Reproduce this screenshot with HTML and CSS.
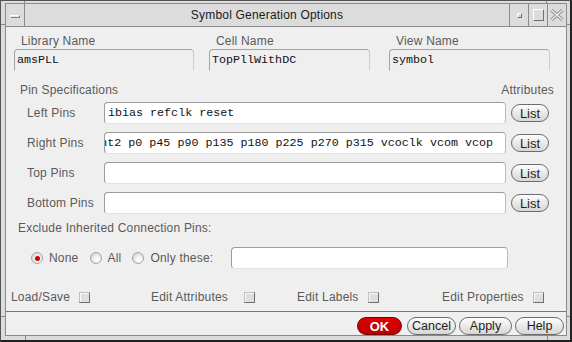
FILE: index.html
```html
<!DOCTYPE html>
<html lang="en">
<head>
    <meta charset="UTF-8">
    <title>Symbol Generation Options</title>
    <link rel="stylesheet" href="styles.css">
</head>
<body>
    <div class="window">
        <!-- Title bar -->
        <div class="titlebar">
            <div class="tb-menu"><span class="menu-bar"></span></div>
            <div class="tb-title">Symbol Generation Options</div>
            <div class="tb-btn"><span class="icon-min"></span></div>
            <div class="tb-btn"><span class="icon-max"></span></div>
            <div class="tb-btn">
                <svg width="14" height="12" viewBox="0 0 14 12">
                    <path d="M1.5 1 L12.5 11 M12.5 1 L1.5 11" stroke="#8c8c8c" stroke-width="3.2" fill="none"/>
                    <path d="M1.5 1 L12.5 11 M12.5 1 L1.5 11" stroke="#ececec" stroke-width="1.5" fill="none"/>
                </svg>
            </div>
        </div>

        <!-- Dialog body -->
        <div class="content">
            <div class="main">
                <div class="names">
                    <div class="name-col col-lib">
                        <div class="name-label">Library Name</div>
                        <div class="ro-field">amsPLL</div>
                    </div>
                    <div class="name-col col-cell">
                        <div class="name-label">Cell Name</div>
                        <div class="ro-field">TopPllWithDC</div>
                    </div>
                    <div class="name-col col-view">
                        <div class="name-label">View Name</div>
                        <div class="ro-field">symbol</div>
                    </div>
                </div>

                <div class="pin-head">
                    <span>Pin Specifications</span>
                    <span>Attributes</span>
                </div>

                <div class="pin-rows">
                    <div class="pin-row">
                        <span class="pin-label">Left Pins</span>
                        <div class="input">ibias refclk reset</div>
                        <button class="btn list-btn">List</button>
                    </div>
                    <div class="pin-row">
                        <span class="pin-label">Right Pins</span>
                        <div class="input input-scrolled"><span class="scroll-text">nt2 p0 p45 p90 p135 p180 p225 p270 p315 vcoclk vcom vcop</span></div>
                        <button class="btn list-btn">List</button>
                    </div>
                    <div class="pin-row">
                        <span class="pin-label">Top Pins</span>
                        <div class="input"></div>
                        <button class="btn list-btn">List</button>
                    </div>
                    <div class="pin-row">
                        <span class="pin-label">Bottom Pins</span>
                        <div class="input"></div>
                        <button class="btn list-btn">List</button>
                    </div>
                </div>

                <div class="exclude-label">Exclude Inherited Connection Pins:</div>

                <div class="radio-row">
                    <span class="radio-item"><span class="radio on"></span>None</span>
                    <span class="radio-item"><span class="radio"></span>All</span>
                    <span class="radio-item last"><span class="radio"></span>Only these:</span>
                    <div class="input only-input"></div>
                </div>

                <div class="check-row">
                    <span class="check-item">Load/Save <span class="checkbox"></span></span>
                    <span class="check-item wide">Edit Attributes <span class="checkbox"></span></span>
                    <span class="check-item">Edit Labels <span class="checkbox"></span></span>
                    <span class="check-item">Edit Properties <span class="checkbox"></span></span>
                </div>
            </div>

            <div class="footer">
                <button class="btn btn-ok">OK</button>
                <button class="btn btn-cancel">Cancel</button>
                <button class="btn btn-apply">Apply</button>
                <button class="btn btn-help">Help</button>
            </div>
        </div>

        <!-- Frame resize handles -->
        <span class="tick tick-v tick-tl"></span>
        <span class="tick tick-v tick-tr"></span>
        <span class="tick tick-v tick-bl"></span>
        <span class="tick tick-v tick-br"></span>
        <span class="tick tick-h tick-lt"></span>
        <span class="tick tick-h tick-lb"></span>
        <span class="tick tick-h tick-rt"></span>
        <span class="tick tick-h tick-rb"></span>
    </div>
</body>
</html>
```

FILE: styles.css
```css
/* Base */
body {
    margin: 0;
    background: #ffffff;
}

.window {
    width: 572px;
    height: 342px;
    box-sizing: border-box;
    position: relative;
    display: flex;
    flex-direction: column;
    background: #dcdcdc;
    border: 1px solid #555;
    border-right: 2px solid #222;
    border-bottom: 2px solid #222;
    padding: 2px 3px 4px 4px;
    font-family: "Liberation Sans", Arial, sans-serif;
    font-size: 12px;
    letter-spacing: 0.2px;
    color: #5a5a5a;
}

/* Title bar */
.titlebar {
    flex: none;
    display: flex;
    height: 24px;
    box-sizing: border-box;
    border: 1px solid #8a8a8a;
    background: #dcdcdc;
}

.tb-menu {
    width: 18px;
    border-right: 1px solid #8a8a8a;
    display: flex;
    align-items: center;
    justify-content: center;
}

.menu-bar {
    width: 8px;
    height: 1px;
    margin-top: 2px;
    background: #e6e6e6;
    border: 1px solid;
    border-color: #fff #808080 #808080 #fff;
}

.tb-title {
    flex: 1;
    text-align: center;
    line-height: 22px;
    color: #1a1a1a;
}

.tb-btn {
    width: 18px;
    border-left: 1px solid #8a8a8a;
    display: flex;
    align-items: center;
    justify-content: center;
}

.icon-min {
    width: 3px;
    height: 3px;
    margin-top: 1px;
    background: #d8d8d8;
    border: 1px solid;
    border-color: #fff #707070 #707070 #fff;
}

.icon-max {
    width: 9px;
    height: 10px;
    border: 1px solid;
    border-color: #fff #707070 #707070 #fff;
}

/* Dialog area */
.content {
    flex: 1;
    display: flex;
    flex-direction: column;
    background: #efefef;
    border: 1px solid #8a8a8a;
    border-top: none;
}

.main {
    padding: 7px 0 7px;
}

.names {
    display: flex;
    padding-left: 8px;
}

.col-lib { width: 180px; }
.col-cell { width: 161px; margin-left: 15px; }
.col-view { width: 161px; margin-left: 19px; }

.name-label {
    padding-left: 7px;
    line-height: 14px;
    margin-bottom: 1px;
}

.ro-field {
    height: 22px;
    box-sizing: border-box;
    border: 1px solid;
    border-color: #a4a4a4 #cdcdcd transparent #a4a4a4;
    border-radius: 4px 4px 0 0;
    padding-left: 2px;
    font-family: "Liberation Mono", monospace;
    font-size: 11.7px;
    letter-spacing: 0;
    line-height: 20px;
    color: #111;
}

/* Pin specifications */
.pin-head {
    display: flex;
    justify-content: space-between;
    margin-top: 12px;
    padding: 0 12px 0 14px;
    line-height: 14px;
}

.pin-rows {
    display: flex;
    flex-direction: column;
    gap: 8px;
    margin-top: 5px;
    padding-left: 21px;
}

.pin-row {
    display: flex;
    align-items: center;
    height: 22px;
}

.pin-label {
    width: 77px;
}

.input {
    width: 402px;
    height: 22px;
    box-sizing: border-box;
    background: #fff;
    border: 1px solid;
    border-color: #9c9c9c #bcbcbc #e2e2e2 #9c9c9c;
    border-radius: 4px;
    padding: 0 3px;
    font-family: "Liberation Mono", monospace;
    font-size: 11.7px;
    letter-spacing: 0;
    line-height: 20px;
    color: #111;
    white-space: nowrap;
    overflow: hidden;
}

.input-scrolled {
    display: flex;
    justify-content: flex-end;
    padding-right: 12px;
}

.scroll-text {
    flex: none;
}

/* Buttons */
.btn {
    height: 18px;
    box-sizing: border-box;
    padding: 0;
    border: 1px solid #6c6c6c;
    border-radius: 9px;
    background: linear-gradient(#fdfdfd, #d6d6d6);
    font-family: "Liberation Sans", Arial, sans-serif;
    font-size: 12.5px;
    line-height: 15px;
    color: #1e1e1e;
}

.list-btn {
    width: 38px;
    margin-left: 5px;
    font-size: 13px;
}

/* Exclude pins */
.exclude-label {
    margin-top: 7px;
    padding-left: 12px;
    line-height: 14px;
}

.radio-row {
    display: flex;
    align-items: center;
    height: 22px;
    margin-top: 12px;
    padding-left: 25px;
}

.radio-item {
    display: flex;
    align-items: center;
    gap: 6px;
    margin-right: 11px;
}

.radio-item.last {
    margin-right: 18px;
}

.radio {
    width: 12px;
    height: 12px;
    box-sizing: border-box;
    border-radius: 50%;
    border: 1px solid #a6a6a6;
    background: radial-gradient(circle at 60% 65%, #ffffff 0, #f2f2f2 35%, #c6c6c6 100%);
    display: flex;
    align-items: center;
    justify-content: center;
}

.radio.on::after {
    content: "";
    width: 5px;
    height: 5px;
    border-radius: 50%;
    background: #d00000;
}

.only-input {
    width: 277px;
}

/* Check boxes */
.check-row {
    display: grid;
    grid-template-columns: 140px 146px 145px auto;
    margin-top: 21px;
    padding-left: 5px;
    line-height: 14px;
}

.check-item {
    display: flex;
    align-items: center;
    gap: 9px;
}

.check-item.wide {
    gap: 16px;
}

.checkbox {
    width: 11px;
    height: 11px;
    box-sizing: border-box;
    background: #dedede;
    border: 1px solid;
    border-color: #bdbdbd #6e6e6e #6e6e6e #bdbdbd;
    box-shadow: inset 1px 1px 0 #fafafa;
}

/* Footer */
.footer {
    flex: 1;
    display: flex;
    justify-content: flex-end;
    gap: 3px;
    border-top: 1px solid #777;
    padding: 5px 2px 0 0;
}

.btn-ok {
    width: 45px;
    margin-right: 2px;
    border-color: #7a0000;
    background: linear-gradient(#e40000, #b80000);
    color: #fff;
    font-weight: bold;
    font-size: 13px;
}

.btn-cancel { width: 49px; }
.btn-apply { width: 53px; }
.btn-help { width: 49px; }

/* Frame handles */
.tick {
    position: absolute;
    background: #8a8a8a;
}

.tick-v { width: 1px; height: 3px; }
.tick-h { width: 4px; height: 1px; }

.tick-tl { top: 0; left: 23px; }
.tick-tr { top: 0; left: 545px; }
.tick-bl { bottom: 0; left: 24px; height: 4px; }
.tick-br { bottom: 0; left: 546px; height: 4px; }
.tick-lt { left: 0; top: 23px; }
.tick-lb { left: 0; top: 315px; }
.tick-rt { right: 0; top: 23px; width: 3px; }
.tick-rb { right: 0; top: 315px; width: 3px; }
```
